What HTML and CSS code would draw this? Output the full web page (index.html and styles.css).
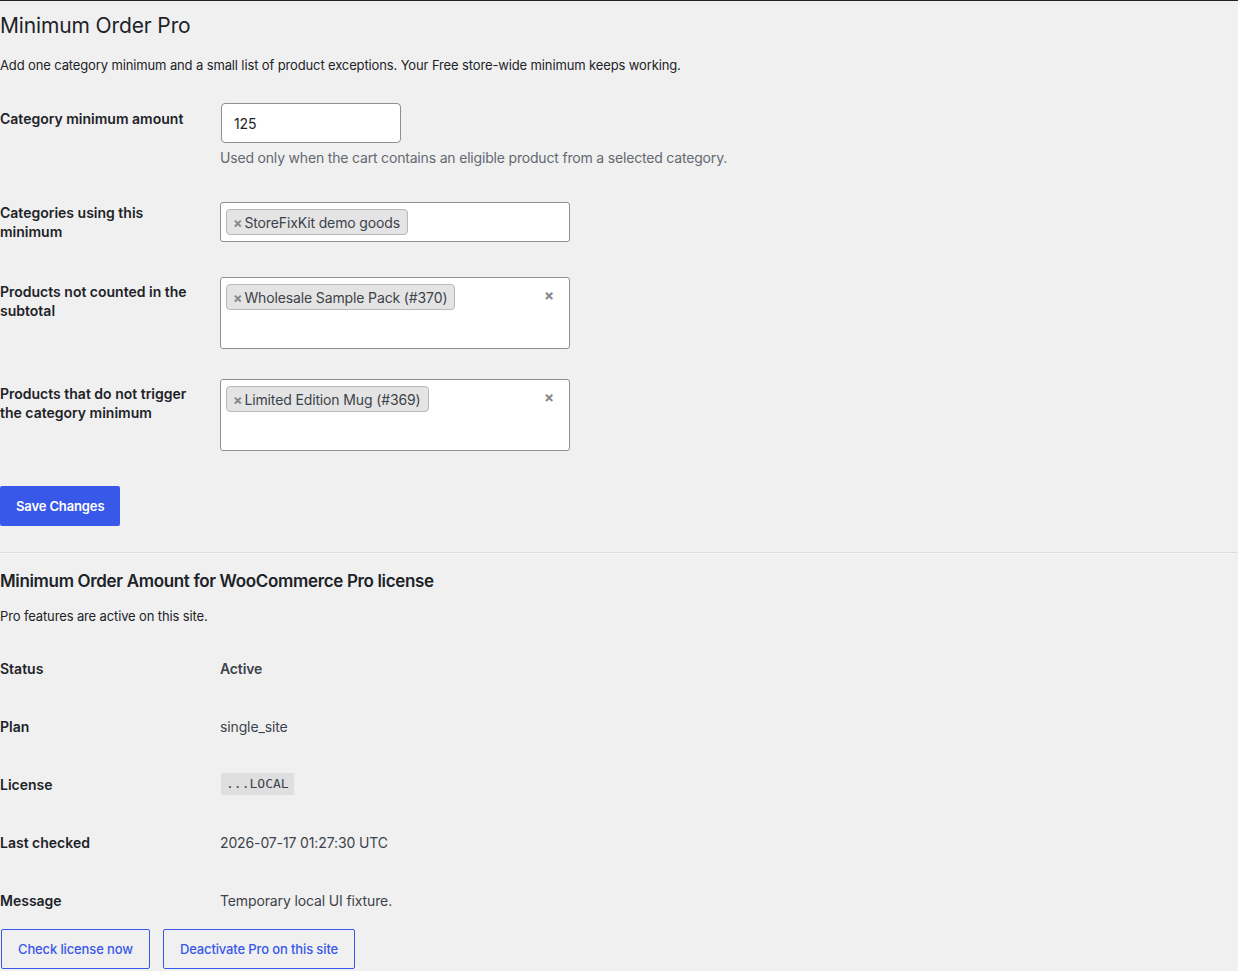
FILE: index.html
```html
<!DOCTYPE html>
<html lang="en">
<head>
    <meta charset="UTF-8">
    <meta name="viewport" content="width=device-width, initial-scale=1.0">
    <title>Minimum Order Pro</title>
    <link rel="stylesheet" href="styles.css">
</head>
<body>

    <div class="wrap">
        <h1>Minimum Order Pro</h1>
        <p class="intro">Add one category minimum and a small list of product exceptions. Your Free store-wide minimum keeps working.</p>

        <div class="form-table">
            <div class="row row-amount">
                <div class="label">Category minimum amount</div>
                <div class="field">
                    <input type="text" class="amount" value="125">
                    <p class="description">Used only when the cart contains an eligible product from a selected category.</p>
                </div>
            </div>

            <div class="row row-cats">
                <div class="label">Categories using this minimum</div>
                <div class="field">
                    <div class="picker single">
                        <span class="tag"><span class="tag-x">×</span>StoreFixKit demo goods</span>
                    </div>
                </div>
            </div>

            <div class="row">
                <div class="label">Products not counted in the subtotal</div>
                <div class="field">
                    <div class="picker multi">
                        <span class="tag"><span class="tag-x">×</span>Wholesale Sample Pack (#370)</span>
                        <span class="clear">×</span>
                    </div>
                </div>
            </div>

            <div class="row">
                <div class="label">Products that do not trigger the category minimum</div>
                <div class="field">
                    <div class="picker multi">
                        <span class="tag"><span class="tag-x">×</span>Limited Edition Mug (#369)</span>
                        <span class="clear">×</span>
                    </div>
                </div>
            </div>
        </div>

        <p class="submit">
            <button class="button-primary">Save Changes</button>
        </p>

        <hr>

        <h2>Minimum Order Amount for WooCommerce Pro license</h2>
        <p class="note">Pro features are active on this site.</p>

        <div class="license-table">
            <div class="lrow"><div class="label">Status</div><div class="value strong">Active</div></div>
            <div class="lrow"><div class="label">Plan</div><div class="value">single_site</div></div>
            <div class="lrow"><div class="label">License</div><div class="value"><code>...LOCAL</code></div></div>
            <div class="lrow"><div class="label">Last checked</div><div class="value">2026-07-17 01:27:30 UTC</div></div>
            <div class="lrow"><div class="label">Message</div><div class="value">Temporary local UI fixture.</div></div>
        </div>

        <div class="actions">
            <button class="button-secondary">Check license now</button>
            <button class="button-secondary">Deactivate Pro on this site</button>
        </div>
    </div>

</body>
</html>
```

FILE: styles.css
```css
:root {
    --bg: #f0f0f1;
    --text: #1d2327;
    --muted: #646970;
    --blue: #3858e9;
    --border: #8c8f94;
    --line: #dcdcde;
}
* {
    box-sizing: border-box;
}
body {
    margin: 0;
    background: var(--bg);
    color: var(--text);
    font-family: Inter, "Noto Sans", Arial, sans-serif;
    font-size: 13px;
    line-height: 1.4;
    letter-spacing: -0.01em;
    border-top: 1px solid #1d2327;
    overflow: hidden;
}
.wrap {
    padding: 0;
}
h1 {
    font-size: 21px;
    font-weight: 400;
    line-height: 1.3;
    margin: 11px 0 0;
}
.intro {
    margin: 16px 0 0;
    line-height: 21px;
}

/* settings rows */
.form-table {
    margin-top: 13px;
}
.row {
    display: grid;
    grid-template-columns: 220px 1fr;
}
.row .label {
    font-size: 14px;
    font-weight: 600;
    line-height: 19px;
    letter-spacing: 0;
    padding: 20px 20px 0 0;
}
.field {
    padding: 15px 0;
}
.row-amount .field {
    padding-top: 14px;
}
.amount {
    width: 180px;
    height: 40px;
    padding: 0 12px;
    border: 1px solid var(--border);
    border-radius: 4px;
    background: white;
    font: inherit;
    font-size: 14px;
    letter-spacing: inherit;
    color: var(--text);
    margin: 0 0 0 1px;
}
.description {
    margin: 4px 0 0;
    font-size: 14px;
    line-height: 21px;
    letter-spacing: -0.013em;
    color: var(--muted);
}
.picker {
    position: relative;
    width: 350px;
    background: white;
    border: 1px solid var(--border);
    border-radius: 3px;
    padding: 6px 5px;
}
.picker.single {
    height: 40px;
    margin: 4px 0 5px;
}
.picker.multi {
    height: 72px;
}
.tag {
    display: inline-flex;
    align-items: center;
    height: 26px;
    padding: 0 7px 0 6px;
    background: #e4e4e4;
    border: 1px solid #b6b8bb;
    border-radius: 4px;
    font-size: 14px;
    color: #3c434a;
}
.tag-x {
    color: #888;
    font-weight: 700;
    font-size: 14px;
    margin-right: 2px;
}
.clear {
    position: absolute;
    top: 7px;
    right: 15px;
    color: #888;
    font-weight: 700;
    font-size: 15px;
}

.submit {
    margin: 20px 0 0;
}
.button-primary {
    height: 40px;
    padding: 0 16px;
    border: none;
    border-radius: 2px;
    background: var(--blue);
    color: white;
    font: inherit;
    font-weight: 600;
    font-size: 13px;
    letter-spacing: inherit;
    cursor: pointer;
}
hr {
    border: none;
    border-top: 1px solid var(--line);
    border-bottom: 1px solid #f6f7f7;
    margin: 26px 0 0;
}
h2 {
    font-size: 17px;
    font-weight: 600;
    line-height: 22px;
    letter-spacing: -0.02em;
    margin: 16px 0 0;
}
.note {
    margin: 14px 0 0;
    line-height: 20px;
}

/* license rows */
.license-table {
    margin-top: 13px;
}
.lrow {
    display: grid;
    grid-template-columns: 220px 1fr;
    height: 58px;
    align-items: center;
}
.lrow .label {
    font-size: 14px;
    font-weight: 600;
    letter-spacing: 0;
}
.lrow .value {
    font-size: 14px;
    color: #3c434a;
}
.lrow .value.strong {
    font-weight: 600;
}
code {
    display: inline-block;
    margin-left: 1px;
    padding: 2px 5px;
    background: #dfdfe0;
    font-family: "DejaVu Sans Mono", "Liberation Mono", monospace;
    font-size: 13px;
    letter-spacing: 0;
    color: #3c434a;
}
.actions {
    display: flex;
    gap: 13px;
    padding-left: 1px;
}
.button-secondary {
    height: 40px;
    padding: 0 16px;
    border: 1px solid var(--blue);
    border-radius: 2px;
    background: transparent;
    color: var(--blue);
    font: inherit;
    font-weight: 500;
    font-size: 13px;
    letter-spacing: inherit;
    cursor: pointer;
}
```
